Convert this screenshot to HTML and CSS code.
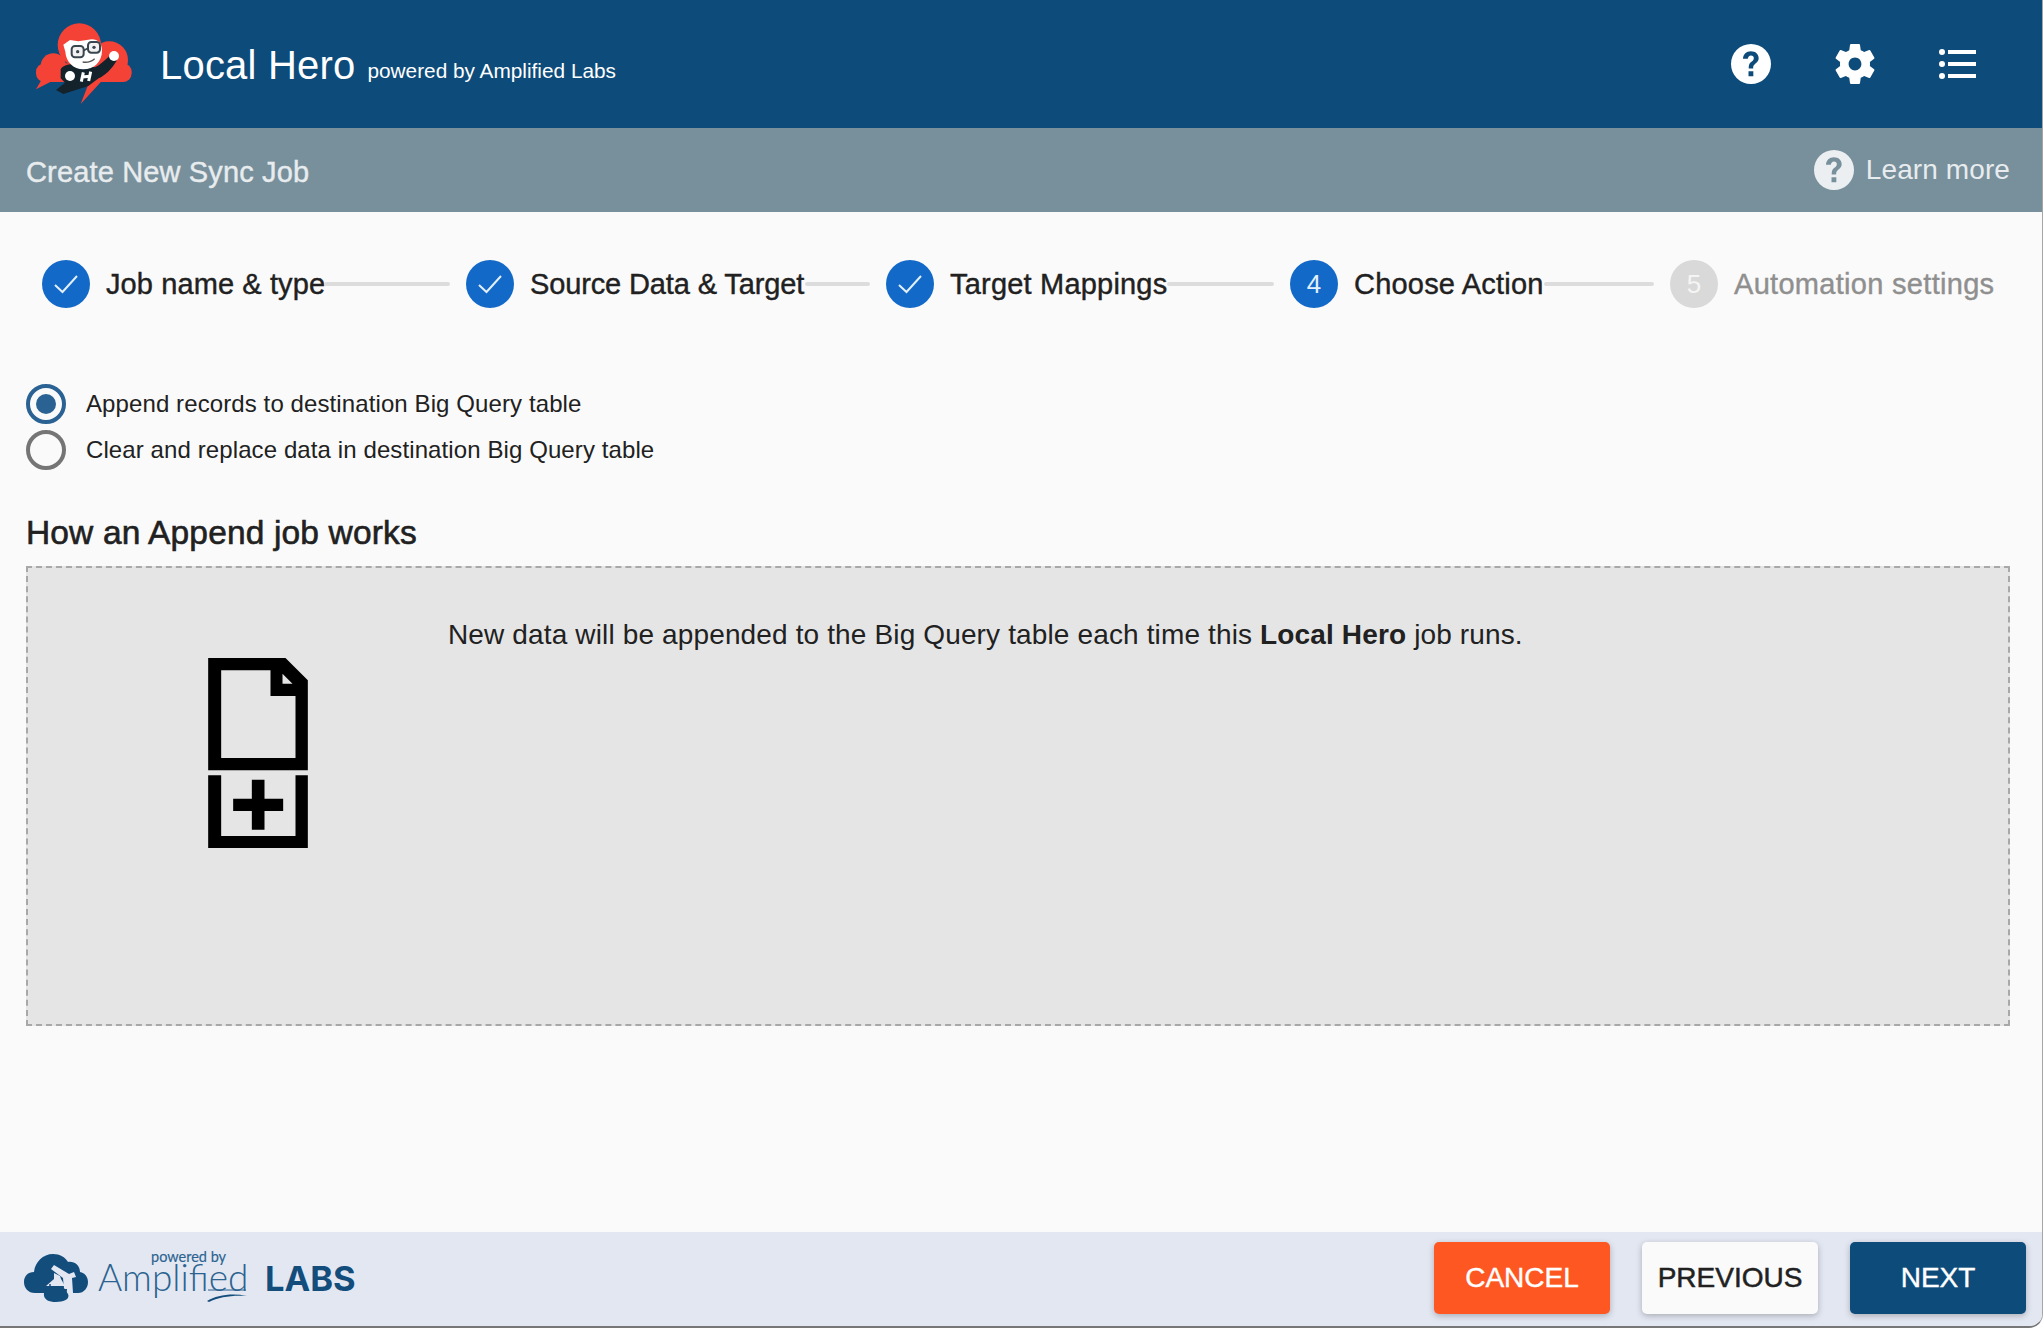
FILE: index.html
```html
<!DOCTYPE html>
<html lang="en">
<head>
  <meta charset="UTF-8" />
  <title>Create New Sync Job - Local Hero</title>
  <link rel="stylesheet" href="styles.css">
</head>
<body>
  <div class="app-window">

    <!-- Header -->
    <div class="header">
      <svg class="hero-logo" viewBox="0 12 390 300">
        <g fill="#f44336">
          <circle cx="178" cy="105" r="65"/>
          <circle cx="268" cy="150" r="56"/>
          <circle cx="100" cy="168" r="38"/>
          <rect x="48" y="160" width="287" height="56" rx="26"/>
          <path d="M70 200L48 238L110 206ZM212 205L182 282L250 208Z"/>
        </g>
        <path fill="#14222c" d="M122 178C130 165 150 160 175 165L225 172C240 165 255 150 268 138L290 152C275 178 255 196 236 205L205 228L130 252L108 240L135 218L122 205Z"/>
        <path fill="#fff" d="M130 104L150 90L175 94L215 88C235 88 246 100 246 122C246 155 222 178 190 178C160 178 138 155 136 125Z"/>
        <circle cx="282" cy="138" r="15" fill="#fff"/>
        <circle cx="150" cy="198" r="15" fill="#fff"/>
        <path fill="none" stroke="#fff" stroke-width="9" d="M190 187L184 215M212 185L206 213M187 201L209 199"/>
        <g fill="#f2f2f2" stroke="#3a464e" stroke-width="6">
          <rect x="155" y="108" width="36" height="34" rx="10"/>
          <rect x="204" y="96" width="36" height="32" rx="10"/>
        </g>
        <path fill="none" stroke="#3a464e" stroke-width="5" d="M190 122L205 114"/>
        <circle cx="173" cy="125" r="5" fill="#3a464e"/>
        <circle cx="222" cy="112" r="5" fill="#3a464e"/>
        <path fill="none" stroke="#555" stroke-width="4" d="M188 156C200 158 215 154 224 146"/>
      </svg>
      <div class="brand-title">Local Hero</div>
      <div class="brand-sub">powered by Amplified Labs</div>
      <div class="header-icons">
        <svg class="header-icon" viewBox="0 0 24 24"><path fill="#fff" d="M12 0a12 12 0 1 0 0 24a12 12 0 0 0 0-24ZM13.400 19.400h-2.900v-3h2.900ZM16 10.400c-.5.800-1.300 1.400-2 2-.5.400-.7.900-.7 2.300h-2.700c0-2 .3-3 1.300-3.800.7-.6 1.800-1.200 1.800-2.400 0-1-.7-1.600-1.700-1.600-1.100 0-1.800.8-1.900 2H7.200c.1-2.800 2-4.600 4.700-4.600 2.800 0 4.700 1.700 4.700 4.200 0 .7-.2 1.300-.6 1.900Z"/></svg>
        <svg class="header-icon" viewBox="2.200 2 19.600 20"><path fill="#fff" d="M19.430 12.980c.04-.32.070-.64.070-.98s-.03-.66-.07-.98l2.110-1.650c.19-.15.240-.42.120-.64l-2-3.460c-.12-.22-.39-.30-.61-.22l-2.490 1c-.52-.40-1.080-.73-1.690-.98l-.38-2.650C14.460 2.180 14.250 2 14 2h-4c-.25 0-.46.18-.49.420l-.38 2.650c-.61.25-1.170.59-1.690.98l-2.490-1c-.23-.09-.49 0-.61.22l-2 3.460c-.13.220-.07.490.12.640l2.110 1.650c-.04.320-.07.650-.07.980s.03.660.07.980l-2.110 1.650c-.19.150-.24.420-.12.640l2 3.460c.12.220.39.300.61.220l2.490-1c.52.400 1.080.730 1.690.980l.38 2.650c.03.240.24.420.49.420h4c.25 0 .46-.18.49-.42l.38-2.650c.61-.25 1.170-.59 1.690-.98l2.490 1c.23.090.49 0 .61-.22l2-3.460c.12-.22.070-.49-.12-.64l-2.110-1.650ZM12 15.200c-1.770 0-3.200-1.430-3.200-3.200s1.430-3.200 3.200-3.200 3.200 1.430 3.200 3.200-1.430 3.200-3.200 3.200Z"/></svg>
        <svg class="list-icon" viewBox="0 0 37 30">
          <g fill="#fff">
            <circle cx="3" cy="3" r="3"/><circle cx="3" cy="15" r="3"/><circle cx="3" cy="27" r="3"/>
            <rect x="9" y="1" width="28" height="4"/><rect x="9" y="13" width="28" height="4"/><rect x="9" y="25" width="28" height="4"/>
          </g>
        </svg>
      </div>
    </div>

    <!-- Sub header -->
    <div class="sub-bar">
      <div class="sub-title">Create New Sync Job</div>
      <div class="learn-more">
        <svg class="learn-icon" viewBox="0 0 24 24"><path fill="#eceff1" d="M12 0a12 12 0 1 0 0 24a12 12 0 0 0 0-24ZM13.400 19.400h-2.900v-3h2.900ZM16 10.400c-.5.800-1.300 1.400-2 2-.5.400-.7.900-.7 2.300h-2.700c0-2 .3-3 1.300-3.800.7-.6 1.800-1.200 1.800-2.400 0-1-.7-1.600-1.700-1.600-1.100 0-1.800.8-1.900 2H7.200c.1-2.800 2-4.600 4.700-4.600 2.800 0 4.700 1.700 4.700 4.200 0 .7-.2 1.300-.6 1.900Z"/></svg>
        <span class="learn-text">Learn more</span>
      </div>
    </div>

    <!-- Content -->
    <div class="content">
      <div class="stepper">
        <div class="step step-tight">
          <div class="step-circle"><svg class="check" viewBox="0 0 24 20"><path fill="none" stroke="#e3f0fb" stroke-width="2" d="M1 11L8.500 18L23 2"/></svg></div>
          <div class="step-label">Job name &amp; type</div>
        </div>
        <div class="step-line"></div>
        <div class="step step-tighter">
          <div class="step-circle"><svg class="check" viewBox="0 0 24 20"><path fill="none" stroke="#e3f0fb" stroke-width="2" d="M1 11L8.500 18L23 2"/></svg></div>
          <div class="step-label">Source Data &amp; Target</div>
        </div>
        <div class="step-line"></div>
        <div class="step">
          <div class="step-circle"><svg class="check" viewBox="0 0 24 20"><path fill="none" stroke="#e3f0fb" stroke-width="2" d="M1 11L8.500 18L23 2"/></svg></div>
          <div class="step-label">Target Mappings</div>
        </div>
        <div class="step-line"></div>
        <div class="step">
          <div class="step-circle">4</div>
          <div class="step-label">Choose Action</div>
        </div>
        <div class="step-line"></div>
        <div class="step step-off">
          <div class="step-circle">5</div>
          <div class="step-label">Automation settings</div>
        </div>
      </div>

      <div class="radio-group">
        <div class="radio-row">
          <span class="radio radio-on"></span>
          <span class="radio-label">Append records to destination Big Query table</span>
        </div>
        <div class="radio-row">
          <span class="radio"></span>
          <span class="radio-label">Clear and replace data in destination Big Query table</span>
        </div>
      </div>

      <h2 class="how-title">How an Append job works</h2>

      <div class="how-box">
        <div class="how-icon">
          <svg viewBox="173 83 299 570">
            <path fill-rule="evenodd" d="M173 83H405L472 150V420H173ZM212 120V383H435V197H360V120ZM396 130V160H426Z"/>
            <path d="M173 435H212V617H435V435H472V653H173Z"/>
            <path d="M304 448H342V505H398V542H342V598H304V542H248V505H304Z"/>
          </svg>
        </div>
        <p class="how-text">New data will be appended to the Big Query table each time this <b>Local Hero</b> job runs.</p>
      </div>
    </div>

    <!-- Footer -->
    <div class="footer">
      <div class="amp-logo">
        <svg class="amp-cloud" viewBox="0 0 64 48">
          <path fill="#134d7c" d="M11 39C4 39 0 34 0 28C0 22 4 18 10 18C11 8 19 0 29 0C36 0 41 3 44 8C50 7 56 11 56 18C61 19 64 23 64 28C64 34 60 39 54 39H49L48 24L52 23L50 18L45 20L30 11L27 15L39 24L40 34L44 40C46 45 41 48 32 48C24 48 19 45 20 39Z"/>
          <path fill="#e3e7f2" d="M22 32L41 32L37 25L36 22L30 19L30 25L22 32Z"/>
          <path fill="#134d7c" d="M21 35H43C43 43 38 47 32 47C26 47 21 43 21 35Z"/>
          <circle cx="22" cy="28" r="1.400" fill="#134d7c"/><circle cx="26" cy="31" r="1" fill="#134d7c"/>
        </svg>
        <div class="amp-text">
          <span class="amp-powered">powered by</span>
          <span class="amp-name">Amplified</span>
          <svg class="amp-swoosh" viewBox="0 0 40 14"><path fill="none" stroke="#2b6390" stroke-width="1" d="M1 2H39"/><path fill="#134d7c" d="M0 13C10 7 25 5 40 8C25 7 12 9 2 14Z"/></svg>
        </div>
        <span class="amp-labs">LABS</span>
      </div>
      <div class="footer-buttons">
        <button class="btn btn-cancel">CANCEL</button>
        <button class="btn btn-prev">PREVIOUS</button>
        <button class="btn btn-next">NEXT</button>
      </div>
    </div>

  </div>
</body>
</html>
```

FILE: styles.css
```css
html, body {
  margin: 0;
  padding: 0;
  height: 100%;
}

body {
  background-color: #fff;
  font-family: "Liberation Sans", Arial, sans-serif;
  color: #212121;
  overflow: hidden;
}

.app-window {
  width: 2043px;
  height: 1328px;
  box-sizing: border-box;
  background-color: #fafafa;
  border-right: 1px solid #a5a5a5;
  border-bottom: 2px solid #777;
  border-radius: 0 0 14px 0;
  overflow: hidden;
  display: flex;
  flex-direction: column;
}

.header {
  height: 128px;
  flex: none;
  background-color: #0d4b7a;
  color: #fff;
  display: flex;
  align-items: center;
  padding-left: 20px;
  padding-right: 66px;
}

.hero-logo {
  width: 130px;
  height: 100px;
  margin-right: 10px;
}

.brand-title {
  font-size: 40px;
  letter-spacing: 0.2px;
  margin-right: 12px;
  margin-top: 2px;
}

.brand-sub {
  font-size: 20.8px;
  margin-top: 13px;
}

.header-icons {
  margin-left: auto;
  display: flex;
  align-items: center;
  gap: 64px;
  margin-right: 1px;
}

.header-icon {
  width: 40px;
  height: 40px;
}

.list-icon {
  width: 37px;
  height: 30px;
  margin-right: -1px;
}

.sub-bar {
  height: 84px;
  flex: none;
  background-color: #78909c;
  color: #e8ecee;
  display: flex;
  align-items: center;
  justify-content: space-between;
  padding: 0 32px 0 26px;
}

.sub-title {
  font-size: 29px;
  letter-spacing: 0.15px;
  margin-top: 4px;
  -webkit-text-stroke: 0.4px #e8ecee;
}

.learn-more {
  display: flex;
  align-items: center;
  gap: 12px;
  font-size: 28px;
  letter-spacing: 0.1px;
}

.learn-text {
  margin-bottom: 1px;
}

.learn-icon {
  width: 40px;
  height: 40px;
}

.content {
  flex: 1;
  padding: 0 32px 0 26px;
}

.stepper {
  display: grid;
  grid-template-columns: 282px 142px 339px 81px 281px 123px 254px 126px 323px;
  align-items: center;
  height: 48px;
  margin-top: 48px;
  margin-left: 16px;
}

.step {
  display: flex;
  align-items: center;
  gap: 16px;
}

.step-circle {
  width: 48px;
  height: 48px;
  flex: none;
  border-radius: 50%;
  background-color: #1269c7;
  color: #e3f0fb;
  display: flex;
  align-items: center;
  justify-content: center;
  font-size: 26px;
}

.check {
  width: 24px;
  height: 20px;
}

.step-label {
  font-size: 29px;
  letter-spacing: 0.2px;
  white-space: nowrap;
  margin-top: 1px;
  -webkit-text-stroke: 0.4px #212121;
}

.step-tight .step-label {
  letter-spacing: 0.1px;
}

.step-tighter .step-label {
  letter-spacing: -0.13px;
}

.step-off .step-circle {
  background-color: #d9d9d9;
  color: #f5f5f5;
}

.step-off .step-label {
  color: #8f8f8f;
  letter-spacing: 0.3px;
  -webkit-text-stroke: 0.4px #8f8f8f;
}

.step-line {
  height: 4px;
  border-radius: 2px;
  background-color: #dcdcdc;
  margin-right: 16px;
}

.radio-group {
  margin-top: 76px;
  display: flex;
  flex-direction: column;
  gap: 6px;
}

.radio-row {
  display: flex;
  align-items: center;
  gap: 20px;
  height: 40px;
}

.radio {
  width: 40px;
  height: 40px;
  box-sizing: border-box;
  border: 4px solid #757575;
  border-radius: 50%;
  display: flex;
  align-items: center;
  justify-content: center;
}

.radio-on {
  border-color: #2a6293;
}

.radio-on::after {
  content: "";
  width: 20px;
  height: 20px;
  border-radius: 50%;
  background-color: #2a6293;
}

.radio-label {
  font-size: 24px;
  letter-spacing: 0.1px;
}

.how-title {
  font-size: 33.5px;
  font-weight: normal;
  letter-spacing: 0.15px;
  margin: 44px 0 14px;
  line-height: 38px;
  -webkit-text-stroke: 0.6px #212121;
}

.how-box {
  height: 460px;
  box-sizing: border-box;
  border: 2px dashed #a8a8a8;
  background-color: #e5e5e5;
  display: flex;
  padding: 90px 0 0 180px;
}

.how-icon {
  width: 100px;
  height: 190px;
  margin-right: 140px;
}

.how-icon svg {
  width: 100px;
  height: 190px;
  display: block;
}

.how-text {
  margin: -40px 0 0;
  font-size: 28px;
  letter-spacing: 0.14px;
  line-height: 34px;
}

.footer {
  height: 94px;
  box-sizing: border-box;
  flex: none;
  background-color: #e3e7f2;
  display: flex;
  align-items: center;
  justify-content: space-between;
  padding: 0 16px 2px 24px;
}

.amp-logo {
  display: flex;
  align-items: center;
  color: #134d7c;
}

.amp-cloud {
  width: 64px;
  height: 48px;
  margin-right: 10px;
}

.amp-text {
  width: 160px;
  height: 60px;
  position: relative;
}

.amp-powered {
  position: absolute;
  left: 53px;
  top: 0;
  font-family: Lato, sans-serif;
  font-size: 14.5px;
  color: #2b6390;
  -webkit-text-stroke: 0.15px #2b6390;
}

.amp-name {
  position: absolute;
  left: 0;
  top: 6px;
  font-family: Lato, sans-serif;
  font-weight: 300;
  font-size: 37px;
  color: #2b6390;
}

.amp-swoosh {
  position: absolute;
  left: 109px;
  top: 40px;
  width: 40px;
  height: 14px;
}

.amp-labs {
  font-family: Inter, sans-serif;
  font-weight: 700;
  font-size: 34.5px;
  margin-left: 7px;
}

.footer-buttons {
  display: flex;
  gap: 32px;
}

.btn {
  width: 176px;
  height: 72px;
  border: none;
  border-radius: 5px;
  padding: 0;
  font-family: "Liberation Sans", Arial, sans-serif;
  font-size: 28px;
  box-shadow: 0 2px 6px rgba(0, 0, 0, 0.25);
}

.btn-cancel {
  background-color: #ff5722;
  color: #fff;
  -webkit-text-stroke: 0.4px #fff;
}

.btn-prev {
  background-color: #fafafa;
  color: #212121;
  -webkit-text-stroke: 0.5px #212121;
}

.btn-next {
  background-color: #0d4b7a;
  color: #fff;
  -webkit-text-stroke: 0.4px #fff;
}
```
